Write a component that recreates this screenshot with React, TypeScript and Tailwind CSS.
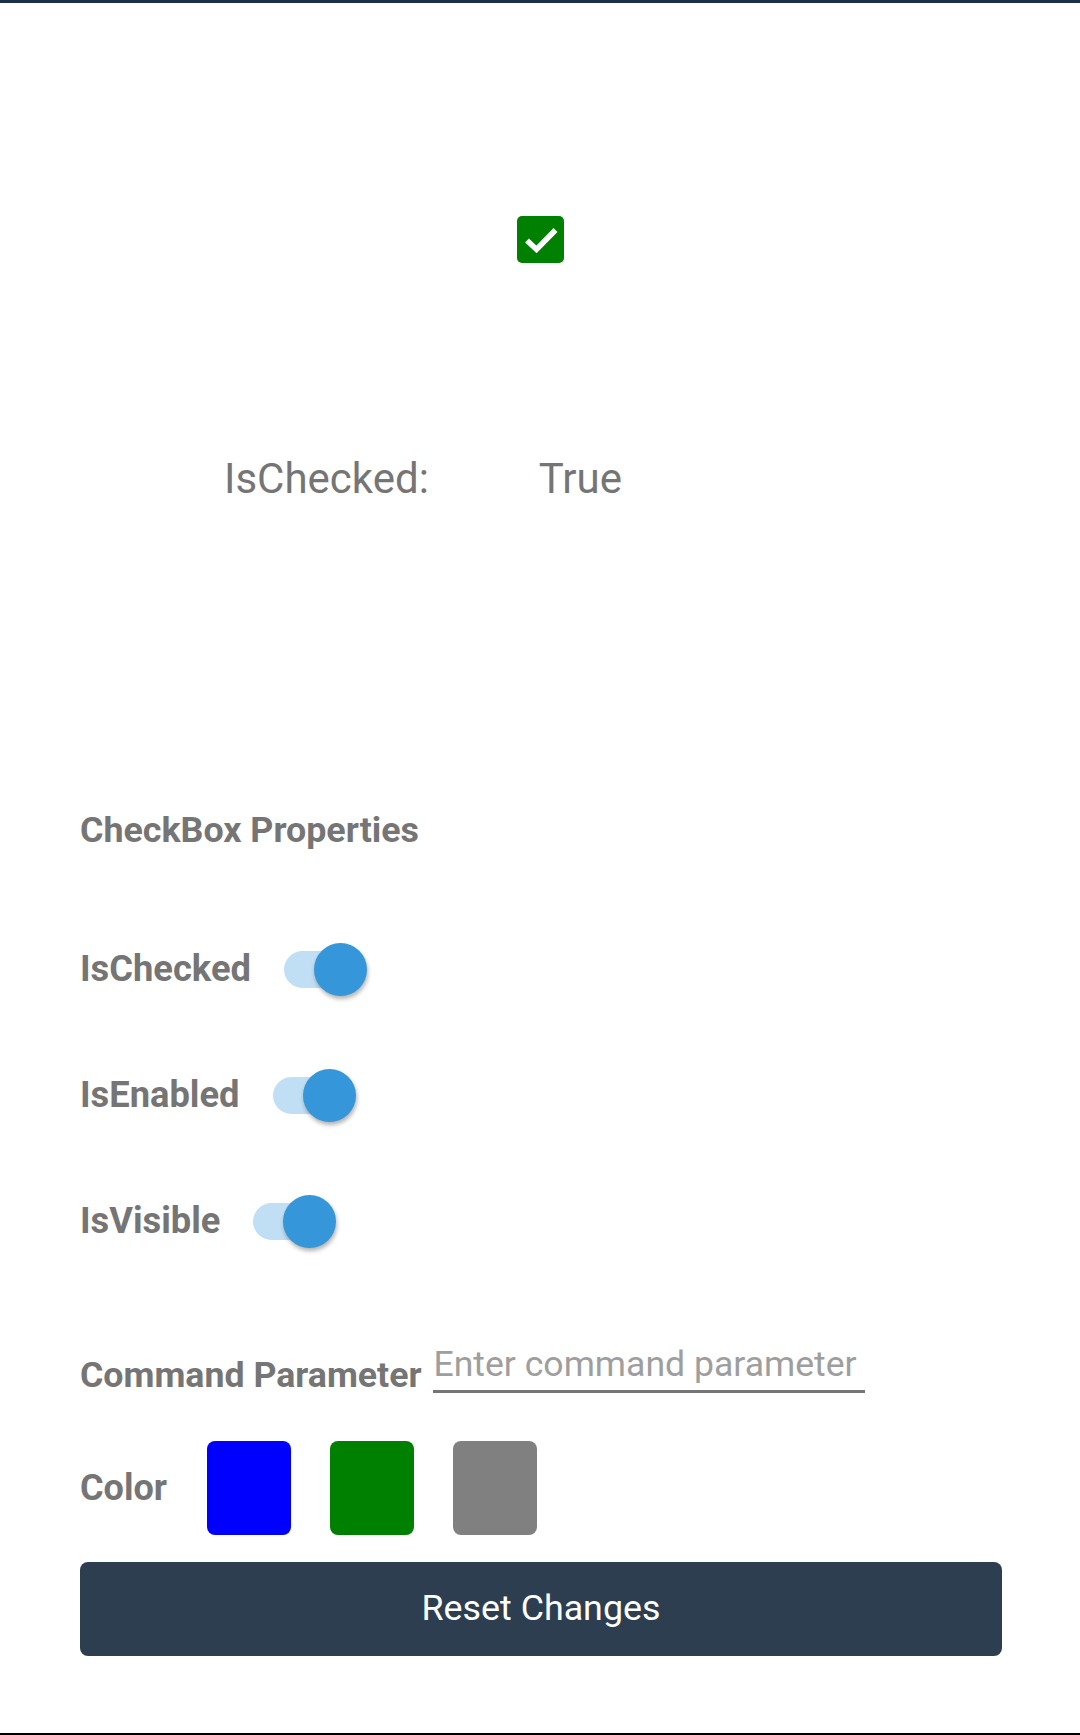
import { useState } from "react";

const SWATCHES = ["bg-[#0000ff]", "bg-[#008000]", "bg-[#808080]"];

function Toggle({ on, onChange }: { on: boolean; onChange: () => void }) {
  return (
    <button onClick={onChange} className="relative w-[83px] h-[56px] shrink-0">
      <span className={`absolute left-0 top-[9.5px] w-[74px] h-[37px] rounded-full ${on ? "bg-[#c0dff4]" : "bg-[#d6d6d6]"}`} />
      <span
        className={`absolute top-[1.5px] w-[53px] h-[53px] rounded-full shadow-[1px_3px_4px_rgba(0,0,0,0.3)] ${
          on ? "left-[30px] bg-[#3596d9]" : "left-0 bg-[#f1f1f1]"
        }`}
      />
    </button>
  );
}

export default function App() {
  const [checked, setChecked] = useState(true);
  const [enabled, setEnabled] = useState(true);
  const [visible, setVisible] = useState(true);
  const [param, setParam] = useState("");
  const [color, setColor] = useState("bg-[#008000]");

  const rows = [
    { label: "IsChecked", on: checked, toggle: () => setChecked(v => !v) },
    { label: "IsEnabled", on: enabled, toggle: () => setEnabled(v => !v) },
    { label: "IsVisible", on: visible, toggle: () => setVisible(v => !v) },
  ];

  return (
    <div className="w-[1080px] h-[1735px] bg-white flex flex-col border-t-[3px] border-[#1b3049] font-['Roboto',sans-serif] text-[#757575]">
      {/* checkbox */}
      <div className="flex justify-center pt-[213px]">
        <button
          onClick={() => setChecked(v => !v)}
          className={`w-[47px] h-[47px] rounded-[5px] ${checked ? "bg-[#008000]" : "border-[5px] border-[#757575] bg-white"} ${visible ? "" : "invisible"}`}
        >
          {checked && (
            <svg viewBox="0 0 47 47" className="w-full h-full">
              <polyline points="10,24.5 19.5,33.5 38.5,14" fill="none" stroke="white" strokeWidth="5.5" />
            </svg>
          )}
        </button>
      </div>

      {/* state */}
      <div className="mt-[191px] h-[50px] flex items-center text-[42px] leading-none">
        <span className="ml-[224px]">IsChecked:</span>
        <span className="ml-[110px]">{checked ? "True" : "False"}</span>
      </div>

      {/* properties */}
      <div className="px-[80px]">
        <h2 className="mt-[302px] h-[50px] flex items-center text-[35.8px] font-bold leading-none">CheckBox Properties</h2>

        <div className="mt-[85px] flex flex-col gap-[70px]">
          {rows.map(r => (
            <div key={r.label} className="h-[56px] flex items-center gap-[33px]">
              <span className="text-[36.3px] font-bold leading-none">{r.label}</span>
              <Toggle on={r.on} onChange={r.toggle} />
            </div>
          ))}
        </div>

        <div className="mt-[88px] h-[64px] flex items-start gap-[12px]">
          <span className="mt-[14px] h-[50px] flex items-center text-[35.7px] font-bold leading-none whitespace-nowrap">Command Parameter</span>
          <input
            value={param}
            onChange={e => setParam(e.target.value)}
            placeholder="Enter command parameter"
            className="w-[432px] h-[56px] border-b-[3px] border-[#757575] outline-none text-[35.6px] text-[#333] placeholder:text-[#9e9e9e] bg-transparent"
          />
        </div>

        <div className="mt-[40px] flex items-center">
          <span className="w-[127px] text-[36px] font-bold leading-none">Color</span>
          <div className="flex gap-[39px]">
            {SWATCHES.map(s => (
              <button key={s} onClick={() => setColor(s)} className={`w-[84px] h-[94px] rounded-[8px] ${s}`} aria-pressed={color === s} />
            ))}
          </div>
        </div>

        <button
          onClick={() => { setChecked(true); setEnabled(true); setVisible(true); setParam(""); }}
          className="mt-[27px] w-[922px] h-[94px] rounded-[8px] bg-[#2c3e50] text-white text-[35.8px] flex items-center justify-center"
        >
          Reset Changes
        </button>
      </div>

      <div className="mt-auto h-[2px] bg-black" />
    </div>
  );
}
